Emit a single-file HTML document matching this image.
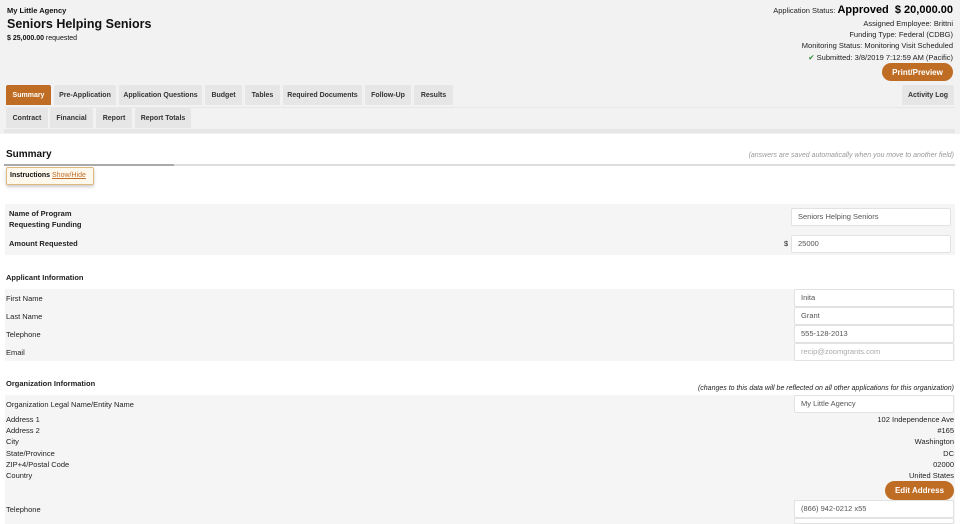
<!DOCTYPE html>
<html><head><meta charset="utf-8"><style>
*{box-sizing:border-box;margin:0;padding:0}
html,body{width:960px;height:524px;overflow:hidden}
body{background:#fff;font-family:"Liberation Sans",Arial,sans-serif;color:#111;position:relative}
.a{position:absolute;white-space:nowrap}
.tab{position:absolute;background:#e6e6e6;font-size:7px;font-weight:bold;color:#333;display:flex;align-items:center;justify-content:center;border-radius:2px 2px 0 0;height:20px;white-space:nowrap}
.inp{position:absolute;background:#fff;border:1px solid #e2e2e2;border-radius:2px;font-size:7.5px;color:#555;padding-left:6px;line-height:16px;height:18px}
.lbl{position:absolute;font-size:7.5px;color:#222;white-space:nowrap}
.r{position:absolute;right:6px;font-size:7.5px;color:#222;white-space:nowrap}
.btn{position:absolute;background:#bf6d24;color:#fff;font-size:8px;font-weight:bold;display:flex;align-items:center;justify-content:center;border-radius:10px}
</style></head><body>
<div class="a" style="left:0;top:0;width:960px;height:134px;background:#f2f2f2"></div>
<div class="a" style="left:4px;top:107px;width:951px;height:1px;background:#e8e8e8"></div>
<div class="a" style="left:4px;top:129px;width:951px;height:4px;background:#e6e6e6"></div>
<div class="a" style="left:7px;top:6px;font-size:7.5px;font-weight:bold">My Little Agency</div>
<div class="a" style="left:7px;top:17px;font-size:12.5px;font-weight:bold">Seniors Helping Seniors</div>
<div class="a" style="left:7px;top:35px;font-size:7px"><b>$ 25,000.00</b> requested</div>
<div class="a" style="right:7px;top:4px;font-size:7.5px;color:#222">Application Status: <b style="font-size:11px;color:#000">Approved&nbsp; $ 20,000.00</b></div>
<div class="a" style="right:7px;top:19px;font-size:7.5px;color:#222">Assigned Employee: Brittni</div>
<div class="a" style="right:7px;top:30px;font-size:7.5px;color:#222">Funding Type: Federal (CDBG)</div>
<div class="a" style="right:7px;top:41px;font-size:7.5px;color:#222">Monitoring Status: Monitoring Visit Scheduled</div>
<div class="a" style="right:7px;top:53px;font-size:7.5px;color:#222"><span style="color:#2a8a2a">✔</span> Submitted: 3/8/2019 7:12:59 AM (Pacific)</div>
<div class="btn" style="left:882px;top:63px;width:71px;height:18px">Print/Preview</div>
<div class="tab" style="left:6px;top:85px;width:45px;background:#bf6d24;color:#fff">Summary</div>
<div class="tab" style="left:54px;top:85px;width:62px">Pre-Application</div>
<div class="tab" style="left:119px;top:85px;width:83px">Application Questions</div>
<div class="tab" style="left:205px;top:85px;width:37px">Budget</div>
<div class="tab" style="left:245px;top:85px;width:35px">Tables</div>
<div class="tab" style="left:283px;top:85px;width:79px">Required Documents</div>
<div class="tab" style="left:365px;top:85px;width:46px">Follow-Up</div>
<div class="tab" style="left:414px;top:85px;width:39px">Results</div>
<div class="tab" style="left:902px;top:85px;width:52px">Activity Log</div>
<div class="tab" style="left:6px;top:108px;width:42px">Contract</div>
<div class="tab" style="left:50px;top:108px;width:43px">Financial</div>
<div class="tab" style="left:96px;top:108px;width:36px">Report</div>
<div class="tab" style="left:135px;top:108px;width:56px">Report Totals</div>
<div class="a" style="left:6px;top:149px;font-size:10px;font-weight:bold">Summary</div>
<div class="a" style="right:6px;top:152px;font-size:7px;font-style:italic;color:#999">(answers are saved automatically when you move to another field)</div>
<div class="a" style="left:4px;top:164px;width:951px;height:2px;background:#ddd"></div>
<div class="a" style="left:4px;top:164px;width:170px;height:2px;background:#aaa"></div>
<div class="a" style="left:6px;top:167px;width:88px;height:18px;background:#fff8ec;border:1px solid #e0b77f;border-radius:2px;box-shadow:0 2px 3px rgba(0,0,0,.2);font-size:7px;font-weight:bold;line-height:16px;padding-left:3px">Instructions <span style="color:#c0702a;text-decoration:underline;font-weight:normal">Show/Hide</span></div>
<div class="a" style="left:5px;top:204px;width:950px;height:51px;background:#f5f5f5"></div>
<div class="lbl" style="left:9px;top:208px;font-weight:bold;line-height:11px">Name of Program<br>Requesting Funding</div>
<div class="lbl" style="left:9px;top:239px;font-weight:bold">Amount Requested</div>
<div class="inp" style="left:791px;top:208px;width:160px">Seniors Helping Seniors</div>
<div class="lbl" style="left:784px;top:239px">$</div>
<div class="inp" style="left:791px;top:235px;width:160px">25000</div>
<div class="lbl" style="left:6px;top:273px;font-weight:bold">Applicant Information</div>
<div class="a" style="left:5px;top:289px;width:950px;height:72px;background:#f5f5f5"></div>
<div class="lbl" style="left:6px;top:294px">First Name</div>
<div class="lbl" style="left:6px;top:312px">Last Name</div>
<div class="lbl" style="left:6px;top:330px">Telephone</div>
<div class="lbl" style="left:6px;top:348px">Email</div>
<div class="inp" style="left:794px;top:289px;width:160px">Inita</div>
<div class="inp" style="left:794px;top:307px;width:160px">Grant</div>
<div class="inp" style="left:794px;top:325px;width:160px">555-128-2013</div>
<div class="inp" style="left:794px;top:343px;width:160px;color:#aaa">recip@zoomgrants.com</div>
<div class="lbl" style="left:6px;top:379px;font-weight:bold">Organization Information</div>
<div class="a" style="right:6px;top:385px;font-size:7px;font-style:italic;color:#222">(changes to this data will be reflected on all other applications for this organization)</div>
<div class="a" style="left:5px;top:395px;width:950px;height:129px;background:#f5f5f5"></div>
<div class="lbl" style="left:6px;top:400px">Organization Legal Name/Entity Name</div>
<div class="inp" style="left:794px;top:395px;width:160px">My Little Agency</div>
<div class="lbl" style="left:6px;top:415px">Address 1</div><div class="r" style="top:415px">102 Independence Ave</div>
<div class="lbl" style="left:6px;top:426px">Address 2</div><div class="r" style="top:426px">#165</div>
<div class="lbl" style="left:6px;top:437px">City</div><div class="r" style="top:437px">Washington</div>
<div class="lbl" style="left:6px;top:449px">State/Province</div><div class="r" style="top:449px">DC</div>
<div class="lbl" style="left:6px;top:460px">ZIP+4/Postal Code</div><div class="r" style="top:460px">02000</div>
<div class="lbl" style="left:6px;top:471px">Country</div><div class="r" style="top:471px">United States</div>
<div class="btn" style="left:885px;top:481px;width:69px;height:19px">Edit Address</div>
<div class="lbl" style="left:6px;top:505px">Telephone</div>
<div class="inp" style="left:794px;top:500px;width:160px">(866) 942-0212 x55</div>
<div class="inp" style="left:794px;top:518px;width:160px;height:6px"></div>
</body></html>
